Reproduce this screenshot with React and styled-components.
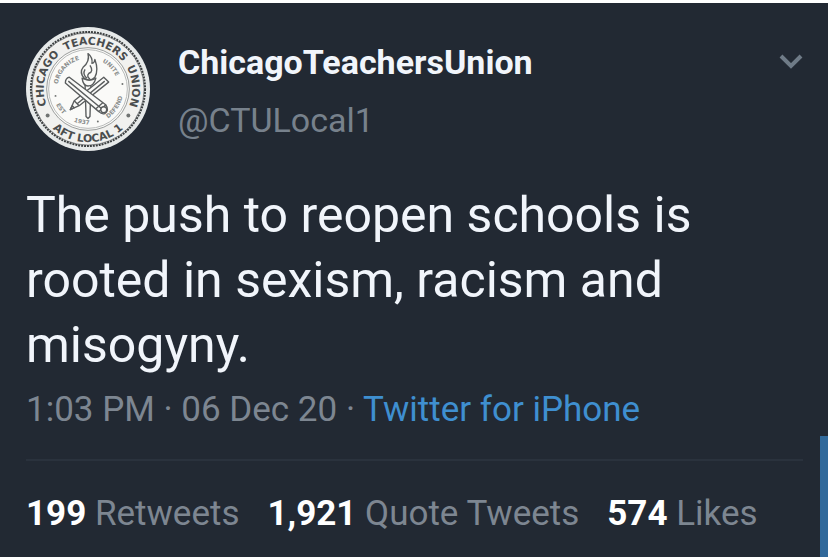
import styled, { createGlobalStyle } from "styled-components";

const stats = [
  { count: "199", label: "Retweets" },
  { count: "1,921", label: "Quote Tweets" },
  { count: "574", label: "Likes" },
];

const sealWords = [
  { word: "CHICAGO", path: "#ringTop", offset: "29%" },
  { word: "TEACHERS", path: "#ringTop", offset: "53%" },
  { word: "UNION", path: "#ringTop", offset: "74%" },
  { word: "AFT LOCAL 1", path: "#ringBottom", offset: "50%" },
];

const mottoWords = [
  { word: "ORGANIZE", path: "#innerTop", offset: "23%" },
  { word: "UNITE", path: "#innerTop", offset: "76%" },
  { word: "EST", path: "#innerBottom", offset: "20%" },
  { word: "1937", path: "#innerBottom", offset: "44%" },
  { word: "DEFEND", path: "#innerBottom", offset: "81%" },
];

const App = () => {
  return (
    <>
      <GlobalStyle />
      <Tweet>
        <Header>
          <Seal />
          <Author>
            <Name>ChicagoTeachersUnion</Name>
            <Handle>@CTULocal1</Handle>
          </Author>
          <MenuButton aria-label="More options">
            <svg width="24" height="16" viewBox="0 0 24 16">
              <path d="M2 3 L12 13 L22 3" fill="none" stroke="#6f7b87" strokeWidth="4" />
            </svg>
          </MenuButton>
        </Header>
        <Text>The push to reopen schools is rooted in sexism, racism and misogyny.</Text>
        <Meta>
          1:03 PM · 06 Dec 20 · <a href="#source">Twitter for iPhone</a>
        </Meta>
        <Stats>
          {stats.map(({ count, label }) => (
            <Stat key={label}>
              <strong>{count}</strong> {label}
            </Stat>
          ))}
        </Stats>
        <ScrollThumb />
      </Tweet>
    </>
  );
};

const CurvedWord = ({ word, path, offset }) => (
  <text>
    <textPath href={path} startOffset={offset}>
      {word}
    </textPath>
  </text>
);

const Seal = () => (
  <SealImage viewBox="0 0 126 126" role="img" aria-label="Chicago Teachers Union">
    <defs>
      <path id="ringTop" d="M63 108 A45 45 0 0 1 63 18 A45 45 0 0 1 63 108" />
      <path id="ringBottom" d="M9 63 A54 54 0 0 0 117 63" />
      <path id="innerTop" d="M32 63 A31 31 0 0 1 94 63" />
      <path id="innerBottom" d="M27 63 A36 36 0 0 0 99 63" />
    </defs>
    <circle cx="63" cy="63" r="63" fill="#e6e9e9" />
    <circle cx="63" cy="63" r="57" fill="#f1f1ef" stroke="#85888a" strokeWidth="1" />
    <circle cx="63" cy="63" r="58" fill="none" stroke="#3a3d3e" strokeWidth="2" strokeDasharray="2 1" />
    <circle cx="63" cy="63" r="42" fill="#fafaf8" stroke="#989b9a" strokeWidth="1" />
    <circle cx="63" cy="63" r="40" fill="none" stroke="#b8bab9" strokeWidth="1" />
    <g fill="#4a4d4e" fontSize="11" fontWeight="700" textAnchor="middle">
      {sealWords.map((item) => (
        <CurvedWord key={item.word} {...item} />
      ))}
    </g>
    <g fill="#8b8e8d" fontSize="6" fontWeight="700" textAnchor="middle">
      {mottoWords.map((item) => (
        <CurvedWord key={item.word} {...item} />
      ))}
    </g>
    <g fill="#707372">
      <circle cx="22" cy="90" r="2" />
      <circle cx="104" cy="90" r="2" />
      <circle cx="30" cy="70" r="1" />
      <circle cx="98" cy="58" r="1" />
      <circle cx="73" cy="96" r="1" />
    </g>
    <g fill="#fafaf8" stroke="#5a5d5e" strokeWidth="1.4" strokeLinejoin="round">
      <path d="M60 58 H66 L65 91 L63 93 L61 91 Z" />
      <path d="M79 51 L84 56 L54 80 L45 84 L49 75 Z" />
      <path d="M49 75 L54 80 M45 84 L49 82 L47 80 Z M80 55 L52 78" />
      <path d="M44 51 L81 79 Q85 85 80 88 Q77 89 74 86 L40 57 Q40 52 44 51 Z" />
      <path d="M43 55 L77 83 M74 86 L81 79 M71 83 L78 77" />
      <circle cx="79" cy="84" r="3" />
      <path d="M57 52 Q58 60 63 60 Q69 60 71 52 Q65 56 57 52 Z" />
      <path d="M63 27 Q68 31 67 37 Q70 36 70 33 Q74 44 70 51 Q65 56 59 52 Q54 46 58 41 Q65 35 63 27 Z" />
      <path d="M65 39 Q69 45 64 47 Q61 50 65 53 M60 43 Q57 48 62 52" fill="none" />
    </g>
  </SealImage>
);

export default App;

const GlobalStyle = createGlobalStyle`
  body {
    margin: 0;
    background: #fff;
    font-family: Roboto, "Liberation Sans", sans-serif;
  }
`;

const Tweet = styled.article`
  position: relative;
  margin: 3px 0 1px;
  padding: 24px 25px 21px 26px;
  background: #222933;
  color: #f1f5fb;
`;

const Header = styled.header`
  display: flex;
  align-items: flex-start;
`;

const SealImage = styled.svg`
  flex: none;
  width: 124px;
  height: 124px;
  margin-right: 28px;
  font-family: "DejaVu Sans", sans-serif;
`;

const Author = styled.div`
  flex: 1;
  padding-top: 13px;
`;

const Name = styled.h1`
  margin: 0;
  font-size: 34px;
  line-height: 44px;
  font-weight: 700;
`;

const Handle = styled.p`
  margin: 14px 0 0;
  color: #77818c;
  font-size: 34px;
  line-height: 44px;
`;

const MenuButton = styled.button`
  margin-top: 26px;
  padding: 0;
  border: 0;
  background: none;
  cursor: pointer;

  svg {
    display: block;
  }
`;

const Text = styled.p`
  margin: 32px 0 0;
  font-size: 50px;
  line-height: 65px;
`;

const Meta = styled.p`
  margin: 10px 0 0;
  padding-bottom: 27px;
  border-bottom: 2px solid #2a323d;
  color: #7d8691;
  font-size: 35px;
  line-height: 44px;

  a {
    color: #3f8fd0;
    text-decoration: none;
  }
`;

const Stats = styled.div`
  display: flex;
  flex-wrap: wrap;
  gap: 28px;
  padding-top: 31px;
`;

const Stat = styled.span`
  color: #7d8691;
  font-size: 35px;
  line-height: 44px;

  strong {
    color: #fff;
    font-weight: 700;
  }
`;

const ScrollThumb = styled.div`
  position: absolute;
  right: 0;
  bottom: 0;
  width: 8px;
  height: 121px;
  background: #31699a;
`;
